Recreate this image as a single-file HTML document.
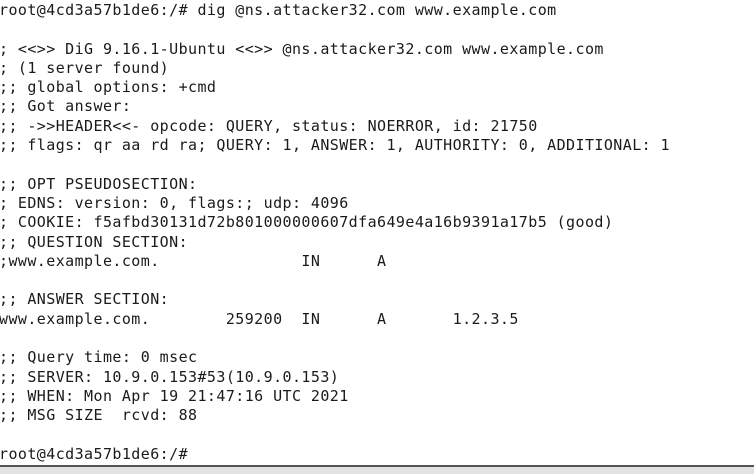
<!DOCTYPE html>
<html><head><meta charset="utf-8"><style>
html,body{margin:0;padding:0;background:#fff;width:754px;height:474px;overflow:hidden;position:relative}
pre{position:absolute;left:-1px;top:1px;margin:0;font-family:"DejaVu Sans Mono","Liberation Mono",monospace;font-size:15px;letter-spacing:0.42px;line-height:19.3px;color:#1a1a1a}
.bar{position:absolute;left:0;top:465px;width:754px;height:2px;background:#555}
.bot{position:absolute;left:0;top:467px;width:754px;height:7px;background:#e2e2e2}
</style></head><body>
<pre>root@4cd3a57b1de6:/# dig @ns.attacker32.com www.example.com

; &lt;&lt;&gt;&gt; DiG 9.16.1-Ubuntu &lt;&lt;&gt;&gt; @ns.attacker32.com www.example.com
; (1 server found)
;; global options: +cmd
;; Got answer:
;; -&gt;&gt;HEADER&lt;&lt;- opcode: QUERY, status: NOERROR, id: 21750
;; flags: qr aa rd ra; QUERY: 1, ANSWER: 1, AUTHORITY: 0, ADDITIONAL: 1

;; OPT PSEUDOSECTION:
; EDNS: version: 0, flags:; udp: 4096
; COOKIE: f5afbd30131d72b801000000607dfa649e4a16b9391a17b5 (good)
;; QUESTION SECTION:
;www.example.com.               IN      A

;; ANSWER SECTION:
www.example.com.        259200  IN      A       1.2.3.5

;; Query time: 0 msec
;; SERVER: 10.9.0.153#53(10.9.0.153)
;; WHEN: Mon Apr 19 21:47:16 UTC 2021
;; MSG SIZE  rcvd: 88

root@4cd3a57b1de6:/#</pre>
<div class="bar"></div><div class="bot"></div>
</body></html>
